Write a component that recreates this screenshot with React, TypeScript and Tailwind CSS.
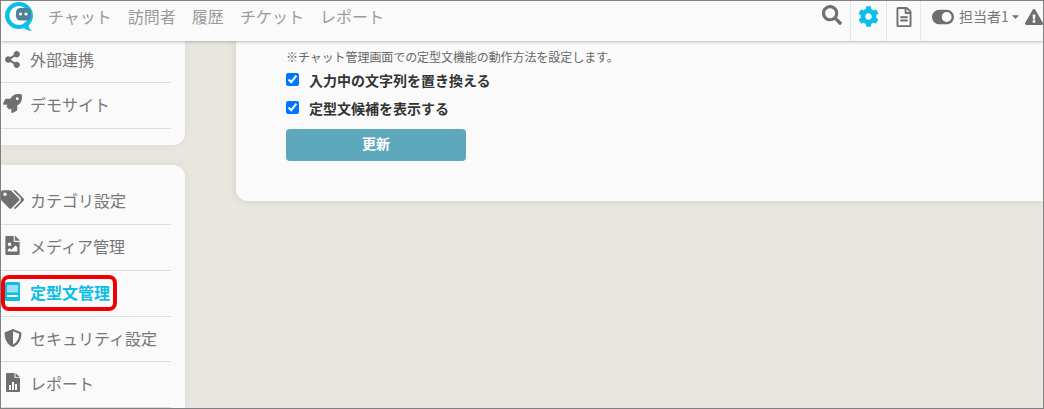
import { FaShareAlt, FaRocket, FaTags, FaFileImage, FaShieldAlt, FaSearch, FaCog, FaRegFileAlt, FaToggleOn, FaExclamationTriangle, FaCaretDown } from "react-icons/fa";
import type { ReactNode } from "react";

const font = { fontFamily: '"Noto Sans CJK JP", "Noto Sans", sans-serif' };

function Logo() {
  return (
    <svg width="28" height="29" viewBox="0 0 28 29">
      <path d="M14 0C6.300 0 0 6 0 13.500S6.300 27 14 27c1.800 0 3.500-.3 5-.9 2 1.600 5 2.900 8 2.900-1.700-1.400-3-3.200-3.500-5.300C26.200 21.200 28 17.600 28 13.500 28 6 21.700 0 14 0Z" fill="#0dbfe8" />
      <path d="M14 4C8.700 4 4.500 8.300 4.500 13.500S8.700 23 14 23c1.500 0 3-.3 4.200-.9l2.300-3.100V6.500C18.800 5 16.500 4 14 4Z" fill="#fff" />
      <path d="M15 22c3-.5 6-2 8-4.500l-1-2-5 1.500-2.500 2Z" fill="#fff" />
      <rect x="11" y="6" width="15" height="12.500" rx="4.500" fill="#4f7f99" />
      <circle cx="15.500" cy="12" r="1.600" fill="#fff" />
      <circle cx="21" cy="12" r="1.600" fill="#fff" />
    </svg>
  );
}

function BookIcon() {
  return (
    <svg width="15" height="19" viewBox="0 0 15 19">
      <rect width="15" height="19" rx="1.500" fill="#0dbfe8" />
      <rect x="2" y="3" width="11" height="7.500" fill="#9adff3" />
      <rect x="2" y="13" width="11" height="2" fill="#fff" />
    </svg>
  );
}

function ReportIcon() {
  return (
    <svg width="14" height="19" viewBox="0 0 14 19" fill="#6f6f6f">
      <path d="M1 0h7.500v5H14v13a1 1 0 0 1-1 1H1a1 1 0 0 1-1-1V1a1 1 0 0 1 1-1Z" />
      <path d="M9.500 0 14 4.200H9.500Z" />
      <rect x="3" y="12" width="2" height="5" fill="#fff" />
      <rect x="6" y="9" width="2" height="8" fill="#fff" />
      <rect x="9" y="11" width="2" height="6" fill="#fff" />
    </svg>
  );
}

function Row({ icon, label, h, active }: { icon: ReactNode; label: string; h: string; active?: boolean }) {
  return (
    <div className={`flex items-center border-b border-[#dedede] ${h}`}>
      <span className="flex w-[29px] shrink-0 items-center justify-center pr-[6px]">{icon}</span>
      <span className={active ? "text-[16px] font-bold text-[#0dbfe8]" : "text-[16px] text-[#777777]"}>{label}</span>
    </div>
  );
}

function Check({ label }: { label: string }) {
  return (
    <label className="flex h-[28px] items-center">
      <input type="checkbox" defaultChecked className="m-0 h-[13px] w-[13px] accent-[#0075ff]" />
      <span className="ml-[10px] pt-[3px] text-[14px] font-bold text-[#333333]">{label}</span>
    </label>
  );
}

export default function App() {
  return (
    <div style={font} className="relative flex h-[409px] w-[1044px] flex-col overflow-hidden border border-[#808080] bg-[#e9e6df]">
      <header className="z-10 flex h-[40px] shrink-0 items-stretch bg-[#fafafa] shadow-[0_1px_3px_rgba(0,0,0,0.25)]">
        <div className="ml-[4px] flex w-[43px] shrink-0 pt-[1px]"><Logo /></div>
        <nav className="flex gap-[16px] pt-[3px] text-[16px] text-[#9a9a9a]">
          <span>チャット</span>
          <span>訪問者</span>
          <span>履歴</span>
          <span>チケット</span>
          <span>レポート</span>
        </nav>
        <div className="ml-auto flex h-full items-stretch">
          <div className="flex w-[32px] justify-center pr-[4px] pt-[4px]"><FaSearch size={20} color="#6f6f6f" /></div>
          <div className="flex w-[37px] justify-center border-x border-[#e6e6e6] pt-[5px]"><FaCog size={21} color="#0dbfe8" /></div>
          <div className="flex w-[34px] justify-center border-r border-[#e6e6e6] pt-[6px]"><FaRegFileAlt size={20} color="#6f6f6f" /></div>
          <div className="flex w-[122px] items-center overflow-hidden whitespace-nowrap pb-[9px] pl-[11px] text-[14px] text-[#777777]">
            <FaToggleOn size={22} color="#6f6f6f" className="shrink-0" />
            <span className="ml-[5px] shrink-0">担当者1</span>
            <FaCaretDown size={11} color="#6f6f6f" className="ml-[1px] shrink-0" />
            <FaExclamationTriangle size={18} color="#6f6f6f" className="ml-[4px] shrink-0" />
          </div>
        </div>
      </header>

      <div className="flex min-h-0 flex-1">
        <aside className="flex w-[184px] shrink-0 flex-col gap-[20px]">
          <div className="-mt-[1px] rounded-br-[12px] bg-[#fafafa] pb-[16px] pr-[14px] shadow-[0_0_8px_rgba(0,0,0,0.06)]">
            <Row h="h-[43px] pb-[4px]" icon={<FaShareAlt size={17} color="#6f6f6f" />} label="外部連携" />
            <Row h="h-[46px] pb-[4px]" icon={<FaRocket size={19} color="#6f6f6f" />} label="デモサイト" />
          </div>
          <div className="flex-1 rounded-tr-[12px] bg-[#fafafa] pr-[14px] pt-[14px] shadow-[0_0_8px_rgba(0,0,0,0.06)]">
            <Row h="h-[46px] pb-[4px]" icon={<FaTags size={23} color="#6f6f6f" />} label="カテゴリ設定" />
            <Row h="h-[46px] pb-[4px]" icon={<FaFileImage size={19} color="#6f6f6f" />} label="メディア管理" />
            <Row h="h-[46px] pb-[4px]" active icon={<BookIcon />} label="定型文管理" />
            <Row h="h-[45px] pb-[2px]" icon={<FaShieldAlt size={18} color="#6f6f6f" />} label="セキュリティ設定" />
            <Row h="h-[46px] pb-[4px]" icon={<ReportIcon />} label="レポート" />
          </div>
        </aside>
        <main className="ml-[51px] min-w-0 flex-1">
          <section className="h-[160px] rounded-bl-[12px] bg-[#fafafa] pl-[50px] pt-[6px] shadow-[0_0_8px_rgba(0,0,0,0.1)]">
            <p className="-mb-[2px] text-[12px] leading-[20px] tracking-[-0.07px] text-[#666666]">※チャット管理画面での定型文機能の動作方法を設定します。</p>
            <Check label="入力中の文字列を置き換える" />
            <Check label="定型文候補を表示する" />
            <button className="mt-[8px] h-[32px] w-[180px] rounded-[4px] bg-[#5ea8bc] pb-[4px] text-[14px] font-bold text-white">更新</button>
          </section>
        </main>
      </div>
      <div className="absolute left-[0px] top-[274px] h-[36px] w-[116px] rounded-[8px] border-[4px] border-[#f00000]" />
    </div>
  );
}
